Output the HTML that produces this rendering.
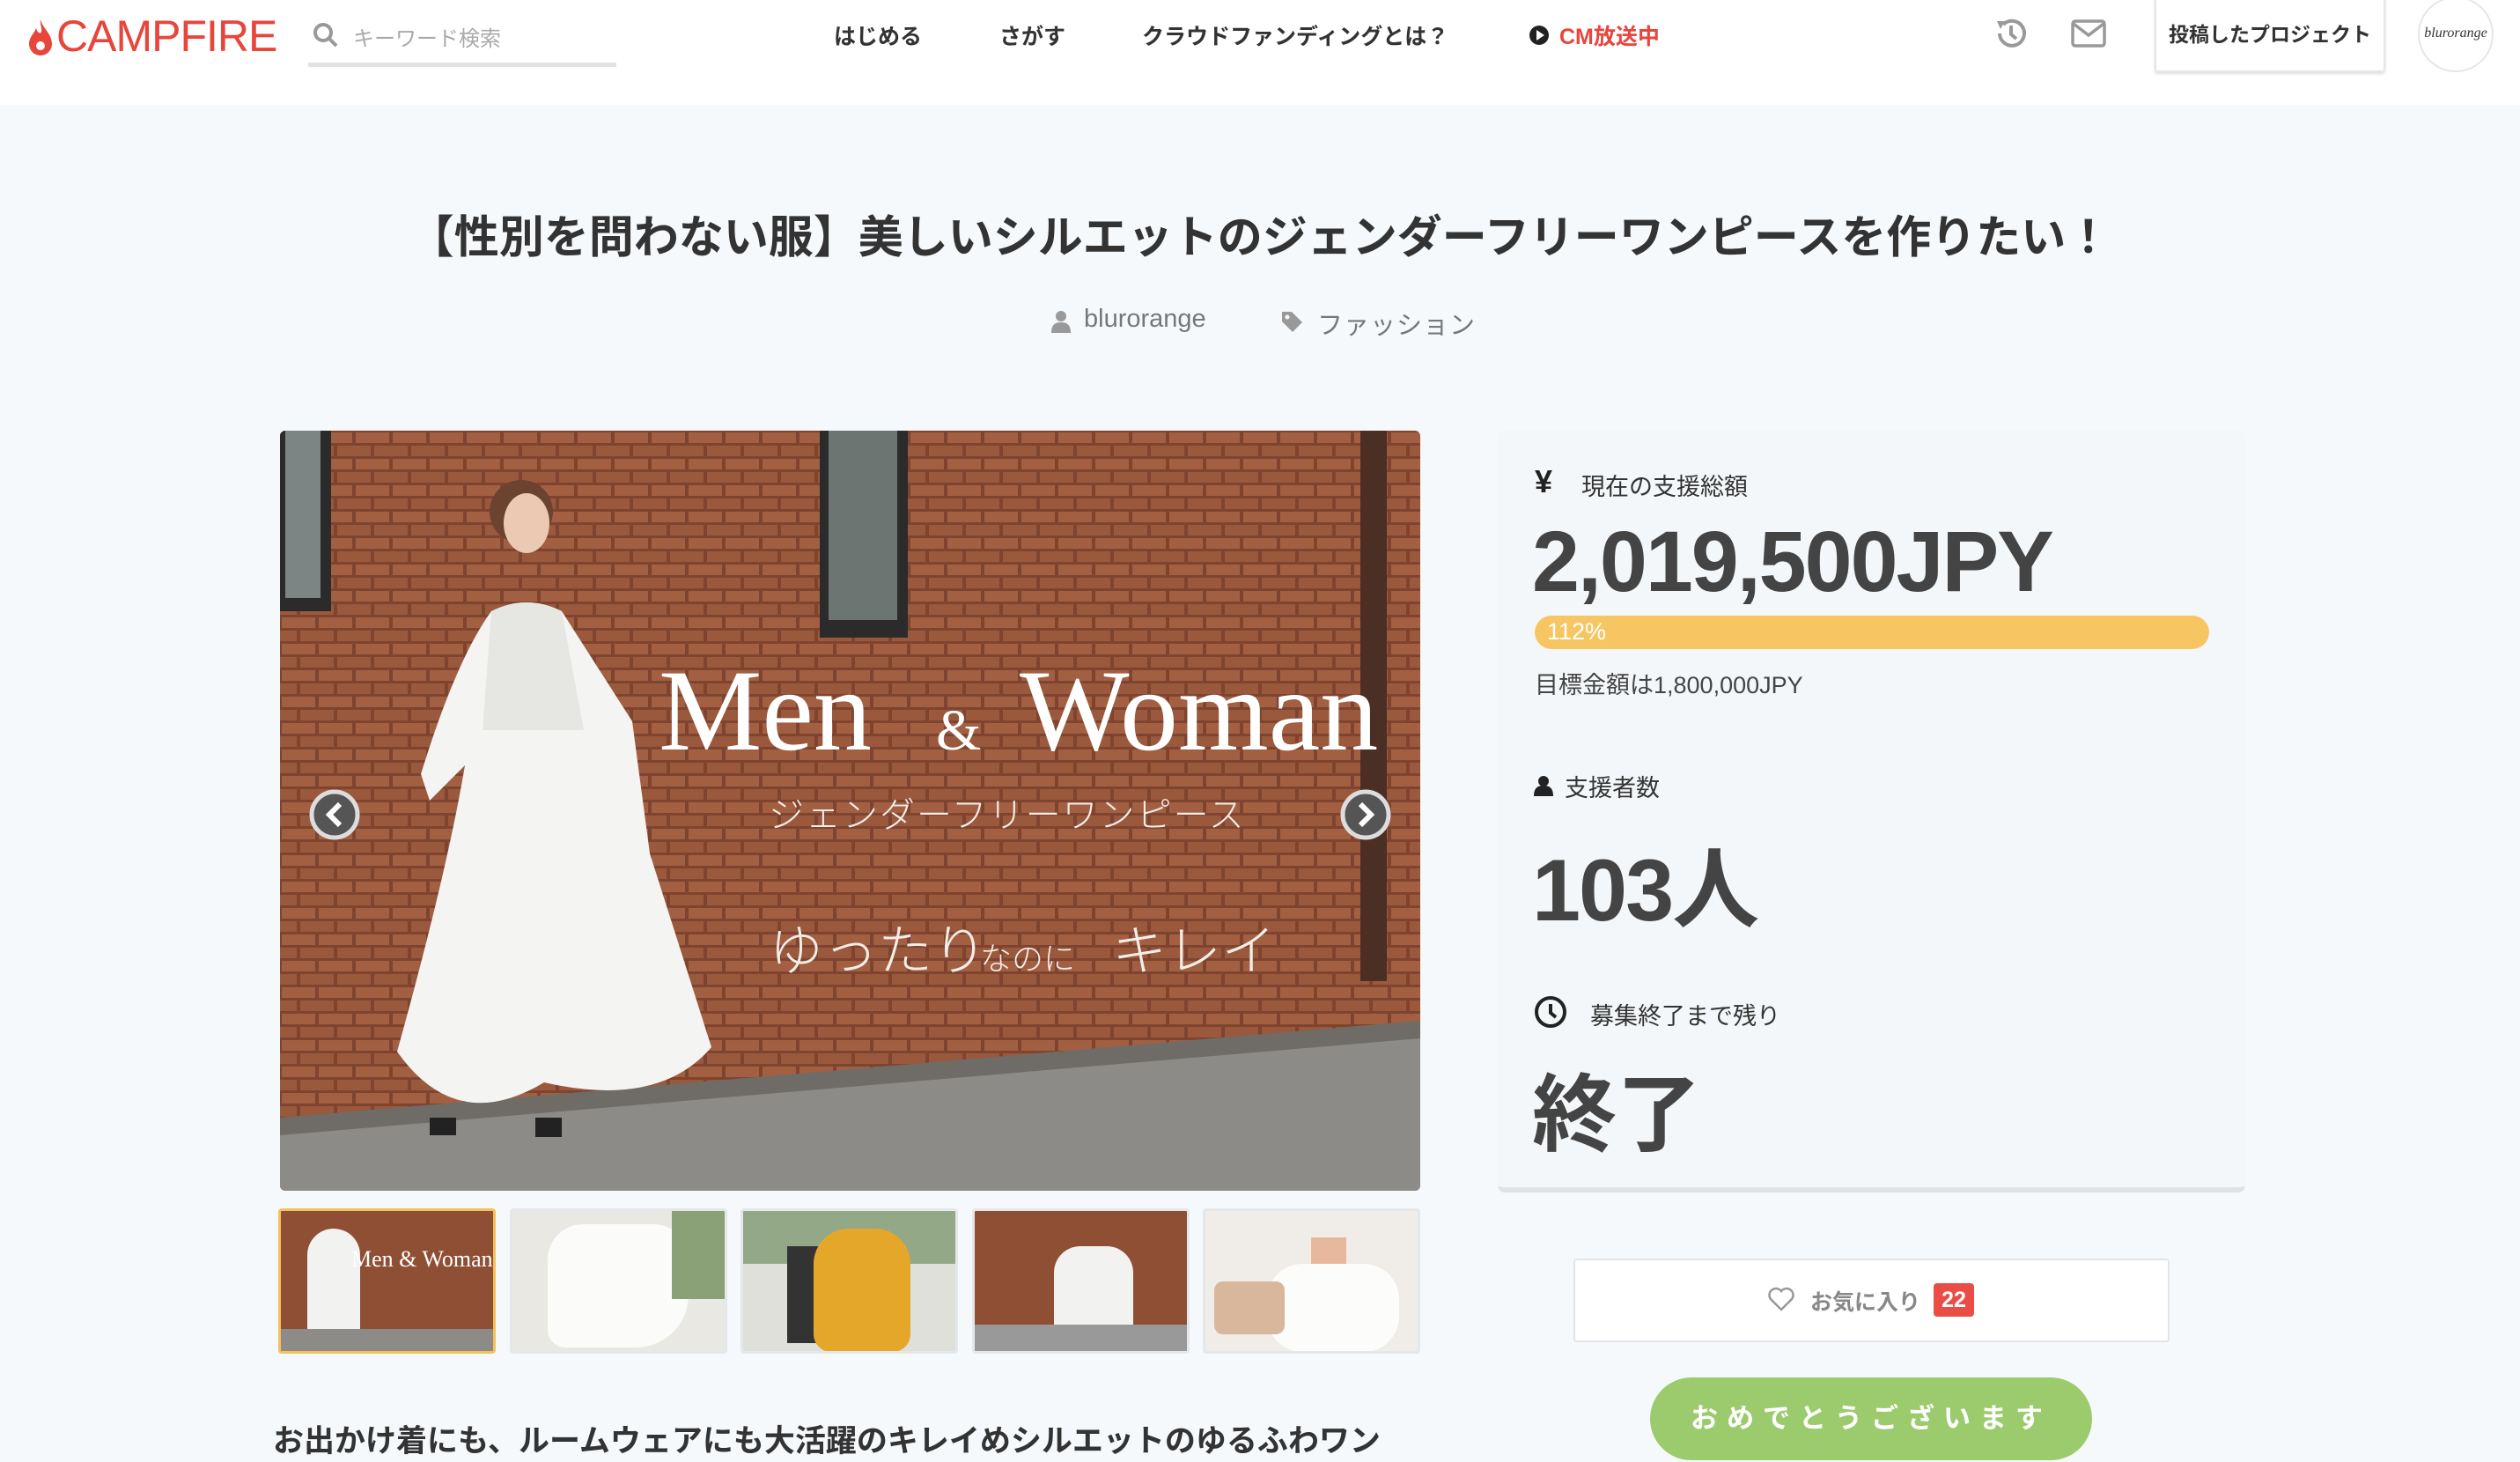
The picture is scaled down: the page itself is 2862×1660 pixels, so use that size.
<!DOCTYPE html>
<html><head><meta charset="utf-8"><style>
*{margin:0;padding:0;box-sizing:border-box}
body{width:2862px;height:1660px;overflow:hidden;background:#f6f9fb;font-family:"Liberation Sans","Noto Sans CJK JP",sans-serif;color:#333;position:relative}
.a{position:absolute;white-space:nowrap}
header{position:absolute;left:0;top:0;width:2862px;height:119px;background:#fff}
.nav{font-size:25px;font-weight:bold;color:#333;top:22px}
.panel{position:absolute;left:1701px;top:489px;width:849px;height:865px;background:#f4f7f9;border-radius:8px;border-bottom:6px solid #dfe3e6}
.lbl{font-size:27px;color:#333}
.big{font-weight:bold;color:#444}
.th{position:absolute;top:1372px;width:247px;height:165px;border-radius:4px;overflow:hidden;border:3px solid #e5e8eb}
</style></head><body>
<header>
<svg class="a" style="left:31px;top:20px" width="30" height="44" viewBox="0 0 30 44"><path d="M15 2C17 12 28 18 28 30a13 13 0 0 1-26 0C2 22 8 18 10 12c2 6 5 7 6 4C17 12 14 7 15 2z" fill="#e8453c"/><circle cx="15" cy="32" r="5" fill="#fff"/></svg>
<div class="a" style="left:64px;top:12px;font-size:50px;color:#e8453c;letter-spacing:-1px">CAMPFIRE</div>
<svg class="a" style="left:354px;top:24px" width="32" height="32" viewBox="0 0 32 32"><circle cx="13" cy="13" r="9" fill="none" stroke="#999" stroke-width="4"/><line x1="20" y1="20" x2="28" y2="28" stroke="#999" stroke-width="4"/></svg>
<div class="a" style="left:401px;top:24px;font-size:24px;color:#aaa">キーワード検索</div>
<div class="a" style="left:350px;top:71px;width:350px;height:5px;background:#e2e2e2"></div>
<div class="a nav" style="left:947px">はじめる</div>
<div class="a nav" style="left:1135px">さがす</div>
<div class="a nav" style="left:1297px">クラウドファンディングとは？</div>
<svg class="a" style="left:1736px;top:28px" width="24" height="24"><circle cx="12" cy="12" r="11" fill="#222"/><polygon points="9,6 18,12 9,18" fill="#fff"/></svg>
<div class="a nav" style="left:1771px;color:#e8453c">CM放送中</div>
<svg class="a" style="left:2262px;top:16px" width="44" height="44" viewBox="0 0 44 44"><path d="M9 22a14 14 0 1 0 4-10" fill="none" stroke="#999" stroke-width="4"/><polygon points="6,8 15,8 10,17" fill="#999"/><path d="M22 13v10l6 5" fill="none" stroke="#999" stroke-width="4"/></svg>
<svg class="a" style="left:2352px;top:22px" width="40" height="32"><rect x="2" y="2" width="36" height="28" rx="3" fill="none" stroke="#999" stroke-width="3.5"/><path d="M3 5l17 13 17-13" fill="none" stroke="#999" stroke-width="3.5"/></svg>
<div class="a" style="left:2447px;top:-4px;width:262px;height:86px;border:2px solid #e6e6e6;border-radius:4px;box-shadow:0 2px 3px #ddd;font-size:23px;font-weight:bold;text-align:center;line-height:82px">投稿したプロジェクト</div>
<div class="a" style="left:2746px;top:-4px;width:86px;height:86px;border:2px solid #e6e6e6;border-radius:50%;background:#fff;font-family:'Liberation Serif',serif;font-style:italic;font-size:16px;text-align:center;line-height:80px">blurorange</div>
</header>

<div class="a" style="left:0;width:2862px;top:228px;text-align:center;font-size:51px;font-weight:bold;color:#333">【性別を問わない服】美しいシルエットのジェンダーフリーワンピースを作りたい！</div>
<svg class="a" style="left:1194px;top:352px" width="22" height="26"><circle cx="11" cy="7" r="6" fill="#999"/><path d="M0 26c0-10 5-12 11-12s11 2 11 12z" fill="#999"/></svg>
<div class="a" style="left:1231px;top:346px;font-size:29px;color:#777">blurorange</div>
<svg class="a" style="left:1454px;top:352px" width="26" height="26"><path d="M2 2h11l12 12-11 11L2 13z" fill="#999"/><circle cx="8" cy="8" r="2.5" fill="#f6f9fb"/></svg>
<div class="a" style="left:1496px;top:346px;font-size:29px;color:#777;letter-spacing:1px">ファッション</div>

<svg class="a" style="left:318px;top:489px;border-radius:6px" width="1295" height="863" viewBox="0 0 1295 863">
<defs><pattern id="br" width="42" height="30" patternUnits="userSpaceOnUse"><rect width="42" height="30" fill="#7f4430"/><rect x="2" y="2" width="38" height="12" fill="#a35f42"/><rect x="-19" y="17" width="38" height="12" fill="#9a583c"/><rect x="23" y="17" width="38" height="12" fill="#9a583c"/></pattern></defs>
<rect width="1295" height="863" fill="url(#br)"/>
<polygon points="0,790 1295,680 1295,863 0,863" fill="#8d8b87"/>
<polygon points="0,780 1295,670 1295,690 0,800" fill="#6f6c68"/>
<rect x="0" y="0" width="58" height="205" fill="#2b2b2b"/><rect x="6" y="0" width="40" height="190" fill="#7c8583"/>
<rect x="613" y="0" width="100" height="235" fill="#2b2b2b"/><rect x="623" y="0" width="78" height="215" fill="#6b7572"/>
<rect x="1227" y="0" width="30" height="625" fill="#4b2e24"/>
<circle cx="274" cy="92" r="36" fill="#6b4330"/><ellipse cx="280" cy="105" rx="26" ry="34" fill="#ebc9b3"/>
<path d="M240 205 Q280 185 320 205 L400 330 L420 480 L490 700 Q430 770 300 740 Q200 800 133 705 Q190 500 210 380 L170 420 L160 390 Q200 260 240 205Z" fill="#f4f4f2"/>
<path d="M240 205 Q280 185 320 205 L345 340 L230 340Z" fill="#e6e6e3"/>
<rect x="170" y="780" width="30" height="20" fill="#222"/><rect x="290" y="780" width="30" height="22" fill="#222"/>
<text x="430" y="362" font-family="Liberation Serif,serif" font-size="132" fill="#fff">Men</text>
<text x="745" y="362" font-family="Liberation Serif,serif" font-size="66" fill="#fff">&amp;</text>
<text x="840" y="362" font-family="Liberation Serif,serif" font-size="132" fill="#fff">Woman</text>
<text x="555" y="450" font-family="Noto Sans CJK JP,sans-serif" font-size="40" font-weight="300" fill="#f2eee8" letter-spacing="2">ジェンダーフリーワンピース</text>
<text x="555" y="612" font-family="Noto Sans CJK JP,sans-serif" font-size="62" font-weight="300" fill="#f2eee8">ゆったり</text>
<text x="795" y="612" font-family="Noto Sans CJK JP,sans-serif" font-size="36" font-weight="300" fill="#f2eee8">なのに</text>
<text x="945" y="612" font-family="Noto Sans CJK JP,sans-serif" font-size="62" font-weight="300" fill="#f2eee8">キレイ</text>
<circle cx="62" cy="436" r="26" fill="#555" stroke="#ddd" stroke-width="5"/><path d="M68 424l-12 12 12 12" fill="none" stroke="#fff" stroke-width="6"/>
<circle cx="1233" cy="436" r="26" fill="#555" stroke="#ddd" stroke-width="5"/><path d="M1227 424l12 12-12 12" fill="none" stroke="#fff" stroke-width="6"/>
</svg>

<div class="th" style="left:316px;border-color:#f5c15a;background:#8f4f35"><div style="position:absolute;left:30px;top:20px;width:60px;height:140px;background:#f2f2f0;border-radius:30px 30px 10px 10px"></div><div style="position:absolute;left:80px;top:40px;font-family:'Liberation Serif',serif;color:#fff;font-size:26px">Men &amp; Woman</div><div style="position:absolute;left:0;bottom:0;width:100%;height:25px;background:#8d8b87"></div></div>
<div class="th" style="left:579px;background:#e9e8e3"><div style="position:absolute;left:40px;top:15px;width:160px;height:140px;background:#fbfbfa;border-radius:40px 40px 60px 20px"></div><div style="position:absolute;right:0;top:0;width:60px;height:100px;background:#8aa076"></div></div>
<div class="th" style="left:841px;background:#dfe0da"><div style="position:absolute;left:0;top:0;width:100%;height:60px;background:#93a887"></div><div style="position:absolute;left:50px;top:40px;width:50px;height:110px;background:#333"></div><div style="position:absolute;left:80px;top:20px;width:110px;height:140px;background:#e5a72a;border-radius:40px 40px 20px 20px"></div></div>
<div class="th" style="left:1104px;background:#8f4f35"><div style="position:absolute;left:90px;top:40px;width:90px;height:110px;background:#f2f2f0;border-radius:30px 30px 10px 10px"></div><div style="position:absolute;left:0;bottom:0;width:100%;height:30px;background:#999"></div></div>
<div class="th" style="left:1366px;background:#f0ece8"><div style="position:absolute;left:120px;top:30px;width:40px;height:40px;background:#e8b89c"></div><div style="position:absolute;left:70px;top:60px;width:150px;height:100px;background:#fcfcfb;border-radius:40px"></div><div style="position:absolute;left:10px;top:80px;width:80px;height:60px;background:#d9b79c;border-radius:10px"></div></div>

<div class="panel"></div>
<div class="a" style="left:1743px;top:526px;font-size:36px;font-weight:bold;color:#222">¥</div>
<div class="a lbl" style="left:1796px;top:531px">現在の支援総額</div>
<div class="a big" style="left:1740px;top:582px;font-size:97px;letter-spacing:-2px">2,019,500JPY</div>
<div class="a" style="left:1743px;top:699px;width:766px;height:38px;border-radius:19px;background:#f7c662"></div>
<div class="a" style="left:1757px;top:702px;font-size:27px;color:#fff">112%</div>
<div class="a" style="left:1743px;top:756px;font-size:27px;color:#444">目標金額は1,800,000JPY</div>
<svg class="a" style="left:1742px;top:880px" width="22" height="24"><circle cx="11" cy="7" r="6" fill="#222"/><path d="M0 24c0-10 5-12 11-12s11 2 11 12z" fill="#222"/></svg>
<div class="a lbl" style="left:1777px;top:873px">支援者数</div>
<div class="a big" style="left:1740px;top:930px;font-size:99px;letter-spacing:-2px">103人</div>
<svg class="a" style="left:1742px;top:1130px" width="38" height="38"><circle cx="19" cy="19" r="16" fill="none" stroke="#222" stroke-width="4"/><path d="M19 10v10l6 5" fill="none" stroke="#222" stroke-width="4"/></svg>
<div class="a lbl" style="left:1806px;top:1132px">募集終了まで残り</div>
<div class="a big" style="left:1740px;top:1188px;font-size:96px">終了</div>

<div class="a" style="left:1787px;top:1429px;width:677px;height:95px;background:#fff;border:2px solid #e2e4e6;border-radius:4px"></div>
<svg class="a" style="left:2008px;top:1461px" width="30" height="28" viewBox="0 0 30 28"><path d="M15 26L3 14a7 7 0 0 1 12-9 7 7 0 0 1 12 9z" fill="none" stroke="#999" stroke-width="2.5"/></svg>
<div class="a" style="left:2056px;top:1459px;font-size:25px;font-weight:bold;color:#888">お気に入り</div>
<div class="a" style="left:2196px;top:1457px;width:46px;height:38px;background:#ea4c46;border-radius:4px;color:#fff;font-size:25px;font-weight:bold;text-align:center;line-height:38px">22</div>
<div class="a" style="left:1874px;top:1564px;width:502px;height:94px;border-radius:47px;background:#9bcb6c;color:#fff;font-size:31px;font-weight:bold;text-align:center;line-height:94px;letter-spacing:10px">おめでとうございます</div>

<div class="a" style="left:310px;top:1608px;font-size:35px;font-weight:bold;color:#333">お出かけ着にも、ルームウェアにも大活躍のキレイめシルエットのゆるふわワン</div>
</body></html>
